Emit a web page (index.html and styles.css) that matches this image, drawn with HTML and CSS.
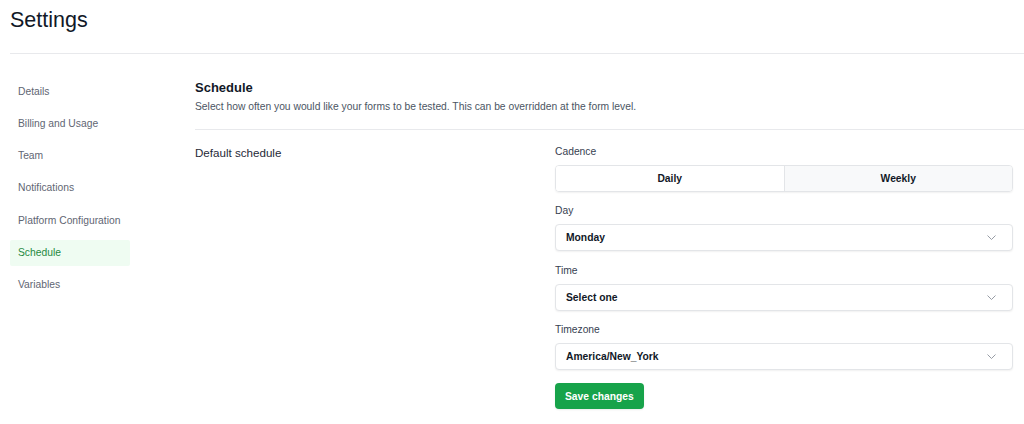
FILE: index.html
```html
<!DOCTYPE html>
<html lang="en">
<head>
<meta charset="utf-8">
<title>Settings</title>
<link rel="stylesheet" href="styles.css">
</head>
<body>
<div class="page">
  <header class="page-header">
    <h1 class="page-title">Settings</h1>
  </header>
  <div class="layout">
    <nav class="sidebar">
      <a class="nav-item">Details</a>
      <a class="nav-item">Billing and Usage</a>
      <a class="nav-item">Team</a>
      <a class="nav-item">Notifications</a>
      <a class="nav-item">Platform Configuration</a>
      <a class="nav-item active">Schedule</a>
      <a class="nav-item">Variables</a>
    </nav>
    <main class="main">
      <section class="section-head">
        <h2 class="section-title">Schedule</h2>
        <p class="section-desc">Select how often you would like your forms to be tested. This can be overridden at the form level.</p>
      </section>
      <div class="row">
        <div class="row-label">Default schedule</div>
        <form class="form">
          <div class="field">
            <div class="label">Cadence</div>
            <div class="segmented">
              <div class="seg seg-on">Daily</div>
              <div class="seg seg-off">Weekly</div>
            </div>
          </div>
          <div class="field">
            <div class="label">Day</div>
            <div class="select"><span>Monday</span><svg class="chev" width="9" height="5" viewBox="0 0 9 5"><path d="M0.5 0.5l4 4 4-4" fill="none" stroke="#8b919b" stroke-width="0.9"/></svg></div>
          </div>
          <div class="field">
            <div class="label">Time</div>
            <div class="select"><span>Select one</span><svg class="chev" width="9" height="5" viewBox="0 0 9 5"><path d="M0.5 0.5l4 4 4-4" fill="none" stroke="#8b919b" stroke-width="0.9"/></svg></div>
          </div>
          <div class="field">
            <div class="label">Timezone</div>
            <div class="select"><span>America/New_York</span><svg class="chev" width="9" height="5" viewBox="0 0 9 5"><path d="M0.5 0.5l4 4 4-4" fill="none" stroke="#8b919b" stroke-width="0.9"/></svg></div>
          </div>
          <div class="actions">
            <button type="button" class="btn-save">Save changes</button>
          </div>
        </form>
      </div>
    </main>
  </div>
</div>
</body>
</html>
```
FILE: styles.css
```css
* { box-sizing: border-box; }
html, body { margin: 0; padding: 0; background: #ffffff; }
body {
  font-family: "Liberation Sans", Arial, Helvetica, sans-serif;
  color: #111827;
  width: 1024px;
  height: 424px;
  overflow: hidden;
}
.page { padding-left: 10px; }
.page-header {
  padding-top: 6px;
  padding-bottom: 19px;
  border-bottom: 1px solid #e8e9ec;
}
.page-title {
  margin: 0;
  font-size: 21.5px;
  line-height: 28px;
  font-weight: 400;
  color: #111827;
}
.layout { display: flex; }
.sidebar {
  width: 120px;
  margin-right: 65px;
  padding-top: 24px;
  display: flex;
  flex-direction: column;
  gap: 6.33px;
}
.nav-item {
  display: flex;
  align-items: center;
  height: 26px;
  padding-left: 8px;
  font-size: 10.3px;
  color: #5f6673;
  border-radius: 2px;
}
.nav-item.active {
  background: #effcf2;
  color: #1f8a3f;
}
.main { flex: 1; }
.section-head {
  padding-top: 25px;
  padding-bottom: 15px;
  border-bottom: 1px solid #e8e9ec;
}
.section-title {
  margin: 0;
  font-size: 13px;
  line-height: 18px;
  font-weight: 700;
  color: #111827;
}
.section-desc {
  margin: 3px 0 0;
  font-size: 10.3px;
  line-height: 14px;
  color: #4b5563;
}
.row {
  display: grid;
  grid-template-columns: 360px 1fr;
  padding-top: 15px;
  padding-right: 11px;
}
.row-label {
  font-size: 11.6px;
  line-height: 16px;
  color: #1f2937;
}
.form {
  margin: 0;
  display: flex;
  flex-direction: column;
  gap: 12.3px;
}
.field { display: flex; flex-direction: column; }
.label {
  font-size: 10.3px;
  line-height: 14px;
  margin-bottom: 6px;
  color: #374151;
}
.segmented {
  display: flex;
  height: 27px;
  border: 1px solid #e3e5e8;
  border-radius: 4px;
  overflow: hidden;
  box-shadow: 0 1px 2px rgba(0,0,0,0.06);
}
.seg {
  flex: 1;
  display: flex;
  align-items: center;
  justify-content: center;
  font-size: 10.3px;
  font-weight: 700;
  color: #111827;
}
.seg-on { background: #ffffff; }
.seg-off { background: #f8f9fa; border-left: 1px solid #e3e5e8; }
.select {
  display: flex;
  align-items: center;
  justify-content: space-between;
  height: 27px;
  padding: 0 16px 0 10px;
  border: 1px solid #e3e5e8;
  border-radius: 4px;
  background: #ffffff;
  box-shadow: 0 1px 2px rgba(0,0,0,0.06);
  font-size: 10.3px;
  font-weight: 700;
  color: #111827;
}
.chev { display: block; }
.actions { padding-top: 1px; }
.btn-save {
  height: 26px;
  padding: 0 10px;
  border: none;
  border-radius: 4px;
  background: #17a34a;
  color: #ffffff;
  font-family: "Liberation Sans", Arial, Helvetica, sans-serif;
  font-size: 10.3px;
  font-weight: 700;
  box-shadow: 0 1px 2px rgba(0,0,0,0.08);
}
```
